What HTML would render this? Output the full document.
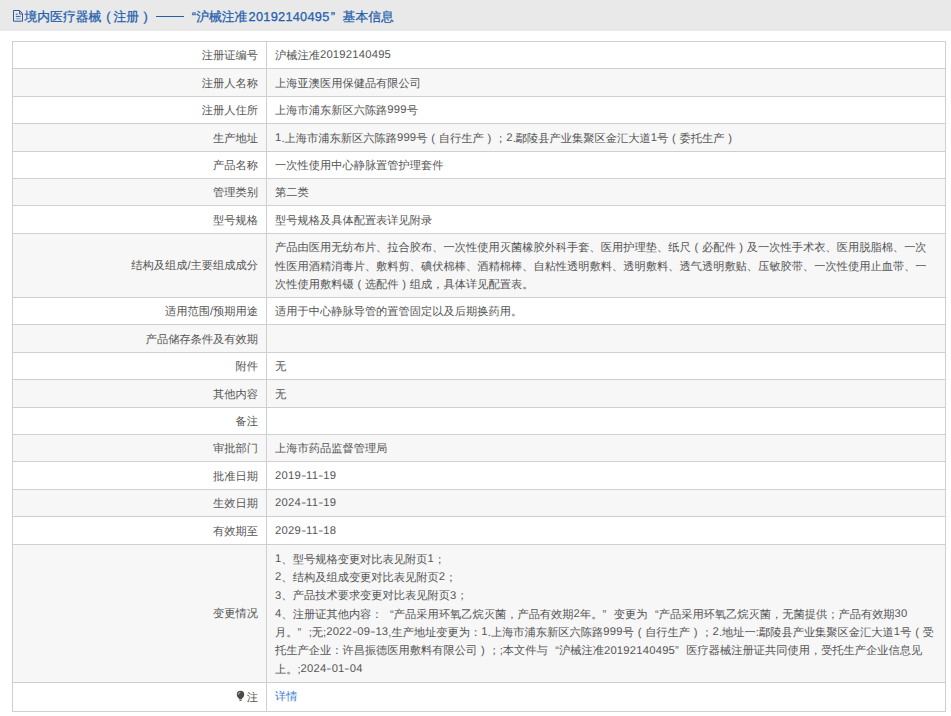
<!DOCTYPE html>
<html><head><meta charset="utf-8"><style>
html,body{margin:0;padding:0;background:#fff;width:951px;height:716px;overflow:hidden;position:relative;text-rendering:geometricPrecision;font-family:"Liberation Sans",sans-serif;}
.hd{position:absolute;left:0;top:0;width:951px;height:31px;background:#e9e9e9;}
.ht{position:absolute;left:25px;top:7.8px;font-size:12.8px;line-height:17px;color:#2360ab;white-space:nowrap;-webkit-text-stroke:0.25px #2360ab;}
.ic{position:absolute;left:13px;top:10px;}
.tb{position:absolute;left:12px;top:41px;width:934px;height:671px;box-sizing:border-box;border:1px solid #cfcfcf;}
.r{position:absolute;left:12px;width:934px;box-sizing:border-box;}
.hl{position:absolute;left:12px;width:934px;height:1px;background:#cfcfcf;}
.vl{position:absolute;left:266px;top:41px;width:1px;height:671px;background:#cfcfcf;}
.lb{position:absolute;left:12px;width:246px;text-align:right;font-size:11.24px;line-height:18.29px;color:#555555;white-space:nowrap;}
.vv{position:absolute;left:275px;font-size:11.24px;line-height:18.29px;color:#555555;white-space:nowrap;}
a{color:#3b7dd4;text-decoration:none;}
.qo{display:inline-block;width:1em;text-align:right;}
.qc{display:inline-block;width:1em;text-align:left;}
.pc{display:inline-block;width:1em;text-align:center;}
.d{letter-spacing:0.22px;position:relative;top:-0.7px;}
.hy{display:inline-block;width:5.2px;text-align:center;letter-spacing:0;}
.hy span{display:inline-block;transform:scaleX(1.35);}
</style></head><body>

<div class="hd"></div>
<svg class="ic" width="11" height="13" viewBox="0 0 11 13"><g fill="none" stroke="#2a5b9e" stroke-width="1"><path d="M0.5 0.5H6.6L9.5 3.5V11.2H0.5Z"/><path d="M6.6 0.7V4H9.3"/><path d="M2.8 4.2H4.5M2.8 6.4H7.6"/><path d="M2.8 8.8H7.6" stroke-opacity="0.55"/></g></svg>
<div class="ht" style="left:24.5px">境内医疗器械</div>
<div class="ht" style="left:106.2px">(</div>
<div class="ht" style="left:113.5px">注册</div>
<div class="ht" style="left:143.6px">)</div>
<div class="ht" style="left:191.8px">“</div>
<div class="ht" style="left:196.2px">沪械注准</div>
<div class="ht" style="left:248.6px"><span style="letter-spacing:0.24px">20192140495</span></div>
<div class="ht" style="left:330.8px">”</div>
<div class="ht" style="left:342.6px">基本信息</div>
<div style="position:absolute;left:156.3px;top:16px;width:27.5px;height:1px;background:#2360ab"></div>
<div class="r" style="top:68px;height:28px;background:#f7f7f7"></div>
<div class="r" style="top:123px;height:28px;background:#f7f7f7"></div>
<div class="r" style="top:178px;height:27px;background:#f7f7f7"></div>
<div class="r" style="top:233px;height:64px;background:#f7f7f7"></div>
<div class="r" style="top:324px;height:28px;background:#f7f7f7"></div>
<div class="r" style="top:379px;height:28px;background:#f7f7f7"></div>
<div class="r" style="top:434px;height:27px;background:#f7f7f7"></div>
<div class="r" style="top:489px;height:27px;background:#f7f7f7"></div>
<div class="r" style="top:544px;height:138px;background:#f7f7f7"></div>
<div class="lb" style="top:47.16px">注册证编号</div>
<div class="vv" style="top:47.16px">沪械注准<span class="d">20192140495</span></div>
<div class="lb" style="top:74.66px">注册人名称</div>
<div class="vv" style="top:74.66px">上海亚澳医用保健品有限公司</div>
<div class="lb" style="top:102.16px">注册人住所</div>
<div class="vv" style="top:102.16px">上海市浦东新区六陈路<span class="d">999</span>号</div>
<div class="lb" style="top:129.66px">生产地址</div>
<div class="vv" style="top:129.66px"><span class="d">1</span>.上海市浦东新区六陈路<span class="d">999</span>号<span class="pc">(</span>自行生产<span class="pc">)</span>；<span class="d">2</span>.鄢陵县产业集聚区金汇大道<span class="d">1</span>号<span class="pc">(</span>委托生产<span class="pc">)</span></div>
<div class="lb" style="top:157.16px">产品名称</div>
<div class="vv" style="top:157.16px">一次性使用中心静脉置管护理套件</div>
<div class="lb" style="top:184.16px">管理类别</div>
<div class="vv" style="top:184.16px">第二类</div>
<div class="lb" style="top:211.66px">型号规格</div>
<div class="vv" style="top:211.66px">型号规格及具体配置表详见附录</div>
<div class="lb" style="top:256.65px">结构及组成/主要组成成分</div>
<div class="vv" style="top:239.37px">产品由医用无纺布片、拉合胶布、一次性使用灭菌橡胶外科手套、医用护理垫、纸尺<span class="pc">(</span>必配件<span class="pc">)</span>及一次性手术衣、医用脱脂棉、一次<br>性医用酒精消毒片、敷料剪、碘伏棉棒、酒精棉棒、自粘性透明敷料、透明敷料、透气透明敷贴、压敏胶带、一次性使用止血带、一<br>次性使用敷料镊<span class="pc">(</span>选配件<span class="pc">)</span>组成，具体详见配置表。</div>
<div class="lb" style="top:303.16px">适用范围/预期用途</div>
<div class="vv" style="top:303.16px">适用于中心静脉导管的置管固定以及后期换药用。</div>
<div class="lb" style="top:330.66px">产品储存条件及有效期</div>
<div class="vv" style="top:330.66px"></div>
<div class="lb" style="top:358.16px">附件</div>
<div class="vv" style="top:358.16px">无</div>
<div class="lb" style="top:385.66px">其他内容</div>
<div class="vv" style="top:385.66px">无</div>
<div class="lb" style="top:413.16px">备注</div>
<div class="vv" style="top:413.16px"></div>
<div class="lb" style="top:440.16px">审批部门</div>
<div class="vv" style="top:440.16px">上海市药品监督管理局</div>
<div class="lb" style="top:467.66px">批准日期</div>
<div class="vv" style="top:467.66px"><span class="d">2019<span class="hy"><span>-</span></span>11<span class="hy"><span>-</span></span>19</span></div>
<div class="lb" style="top:495.16px">生效日期</div>
<div class="vv" style="top:495.16px"><span class="d">2024<span class="hy"><span>-</span></span>11<span class="hy"><span>-</span></span>19</span></div>
<div class="lb" style="top:522.65px">有效期至</div>
<div class="vv" style="top:522.65px"><span class="d">2029<span class="hy"><span>-</span></span>11<span class="hy"><span>-</span></span>18</span></div>
<div class="lb" style="top:604.65px">变更情况</div>
<div class="vv" style="top:550.78px"><span class="d">1</span>、型号规格变更对比表见附页<span class="d">1</span>；<br><span class="d">2</span>、结构及组成变更对比表见附页<span class="d">2</span>；<br><span class="d">3</span>、产品技术要求变更对比表见附页<span class="d">3</span>；<br><span class="d">4</span>、注册证其他内容：<span class="qo">“</span>产品采用环氧乙烷灭菌，产品有效期<span class="d">2</span>年。<span class="qc">”</span>变更为<span class="qo">“</span>产品采用环氧乙烷灭菌，无菌提供；产品有效期<span class="d">30</span><br>月。<span class="qc">”</span>;无;<span class="d">2022<span class="hy"><span>-</span></span>09<span class="hy"><span>-</span></span>13</span>,生产地址变更为：<span class="d">1</span>.上海市浦东新区六陈路<span class="d">999</span>号<span class="pc">(</span>自行生产<span class="pc">)</span>；<span class="d">2</span>.地址一:鄢陵县产业集聚区金汇大道<span class="d">1</span>号<span class="pc">(</span>受<br>托生产企业：许昌振德医用敷料有限公司<span class="pc">)</span>；;本文件与<span class="qo">“</span>沪械注准<span class="d">20192140495</span><span class="qc">”</span>医疗器械注册证共同使用，受托生产企业信息见<br>上。;<span class="d">2024<span class="hy"><span>-</span></span>01<span class="hy"><span>-</span></span>04</span></div>
<svg style="position:absolute;left:236px;top:690px" width="9" height="12" viewBox="0 0 9 12"><circle cx="4.5" cy="4.5" r="3.7" fill="#4a4a4a"/><path d="M1.6 6.2L7.4 6.2L5.7 9.3H3.3Z" fill="#4a4a4a"/><rect x="3.4" y="9.7" width="2.2" height="1.1" fill="#4a4a4a"/><path d="M2.3 4.6A2.4 2.4 0 0 1 4.4 2.3" fill="none" stroke="#fff" stroke-width="0.9" stroke-opacity="0.75"/></svg>
<div class="lb" style="top:689.15px">注</div>
<div class="vv" style="top:688.36px"><a>详情</a></div>
<div class="hl" style="top:68px"></div>
<div class="hl" style="top:96px"></div>
<div class="hl" style="top:123px"></div>
<div class="hl" style="top:151px"></div>
<div class="hl" style="top:178px"></div>
<div class="hl" style="top:205px"></div>
<div class="hl" style="top:233px"></div>
<div class="hl" style="top:297px"></div>
<div class="hl" style="top:324px"></div>
<div class="hl" style="top:352px"></div>
<div class="hl" style="top:379px"></div>
<div class="hl" style="top:407px"></div>
<div class="hl" style="top:434px"></div>
<div class="hl" style="top:461px"></div>
<div class="hl" style="top:489px"></div>
<div class="hl" style="top:516px"></div>
<div class="hl" style="top:544px"></div>
<div class="hl" style="top:682px"></div>
<div class="vl"></div>
<div class="tb"></div>
</body></html>
